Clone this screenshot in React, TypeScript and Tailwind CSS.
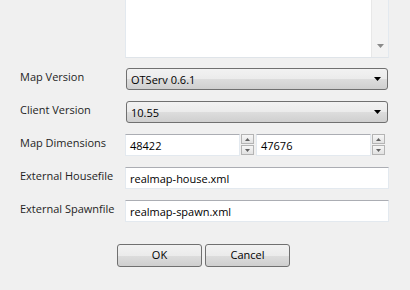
import React from "react";

const font = { fontFamily: '"Open Sans", "Noto Sans", Arial, sans-serif' };

function Select({ value }: { value: string }) {
  return (
    <div className="ml-px flex h-[22px] w-[262px] items-center justify-between rounded-[3px] border border-[#707070] bg-[linear-gradient(to_bottom,#f2f2f2_0%,#ebebeb_50%,#dddddd_50%,#cfcfcf_100%)] pl-[4px] pr-[6px]">
      <span className="text-[11px] leading-none text-black">{value}</span>
      <svg width="7" height="4" viewBox="0 0 7 4">
        <path d="M0 0 L7 0 L3.5 4 Z" fill="#000" />
      </svg>
    </div>
  );
}

function TextBox({ value, w }: { value: string; w: string }) {
  return (
    <div
      className={`flex h-[22px] ${w} items-center border border-[#e3e9ef] border-t-[#abadb3] bg-white pl-[4px]`}
    >
      <span className="text-[11px] leading-none text-black">{value}</span>
    </div>
  );
}

function Spin() {
  const half =
    "flex h-[10px] w-[13px] items-center justify-center border border-[#b4b4b4] bg-[linear-gradient(to_bottom,#f6f6f6,#e2e2e2)]";
  return (
    <div className="flex flex-col gap-px">
      <div className={half}>
        <svg width="5" height="3" viewBox="0 0 5 3">
          <path d="M0 3 L5 3 L2.5 0 Z" fill="#606060" />
        </svg>
      </div>
      <div className={half}>
        <svg width="5" height="3" viewBox="0 0 5 3">
          <path d="M0 0 L5 0 L2.5 3 Z" fill="#606060" />
        </svg>
      </div>
    </div>
  );
}

function Row({ label, children }: { label: string; children: React.ReactNode }) {
  return (
    <div className="flex h-[22px] items-start">
      <div className="w-[105px] pt-[3px] text-[11px] leading-none text-[#1e1e1e]">{label}</div>
      {children}
    </div>
  );
}

function Button({ label }: { label: string }) {
  return (
    <div className="flex h-[23px] w-[85px] items-center justify-center rounded-[3px] border border-[#707070] bg-[linear-gradient(to_bottom,#f2f2f2_0%,#ebebeb_50%,#dddddd_50%,#cfcfcf_100%)] text-[11px] text-black">
      {label}
    </div>
  );
}

export default function App() {
  return (
    <div className="h-[290px] w-[410px] overflow-hidden bg-[#f0f0f0]" style={font}>
      <div className="pl-[20px]">
        <div className="ml-[105px] flex h-[58px] w-[264px] border-x border-b border-x-[#e3e9ef] border-b-[#dfe4e9] bg-white">
          <div className="flex-1" />
          <div className="flex w-[17px] flex-col items-center justify-end border-l border-[#e8e8e8] bg-[#f3f3f3] pb-[9px]">
            <svg width="7" height="4" viewBox="0 0 7 4">
              <path d="M0 0 L7 0 L3.5 4 Z" fill="#8a8a8a" />
            </svg>
          </div>
        </div>
        <div className="mt-[10px] flex flex-col gap-[11px]">
          <Row label="Map Version">
            <Select value="OTServ 0.6.1" />
          </Row>
          <Row label="Client Version">
            <Select value="10.55" />
          </Row>
          <Row label="Map Dimensions">
            <div className="flex items-start">
              <TextBox value="48422" w="w-[115px]" />
              <div className="ml-[1px]">
                <Spin />
              </div>
              <div className="ml-[2px]">
                <TextBox value="47676" w="w-[115px]" />
              </div>
              <div className="ml-[1px]">
                <Spin />
              </div>
            </div>
          </Row>
          <Row label="External Housefile">
            <TextBox value="realmap-house.xml" w="w-[264px]" />
          </Row>
          <Row label="External Spawnfile">
            <TextBox value="realmap-spawn.xml" w="w-[264px]" />
          </Row>
        </div>
      </div>
      <div className="mt-[22px] flex gap-[3px] pl-[117px]">
        <Button label="OK" />
        <Button label="Cancel" />
      </div>
    </div>
  );
}
